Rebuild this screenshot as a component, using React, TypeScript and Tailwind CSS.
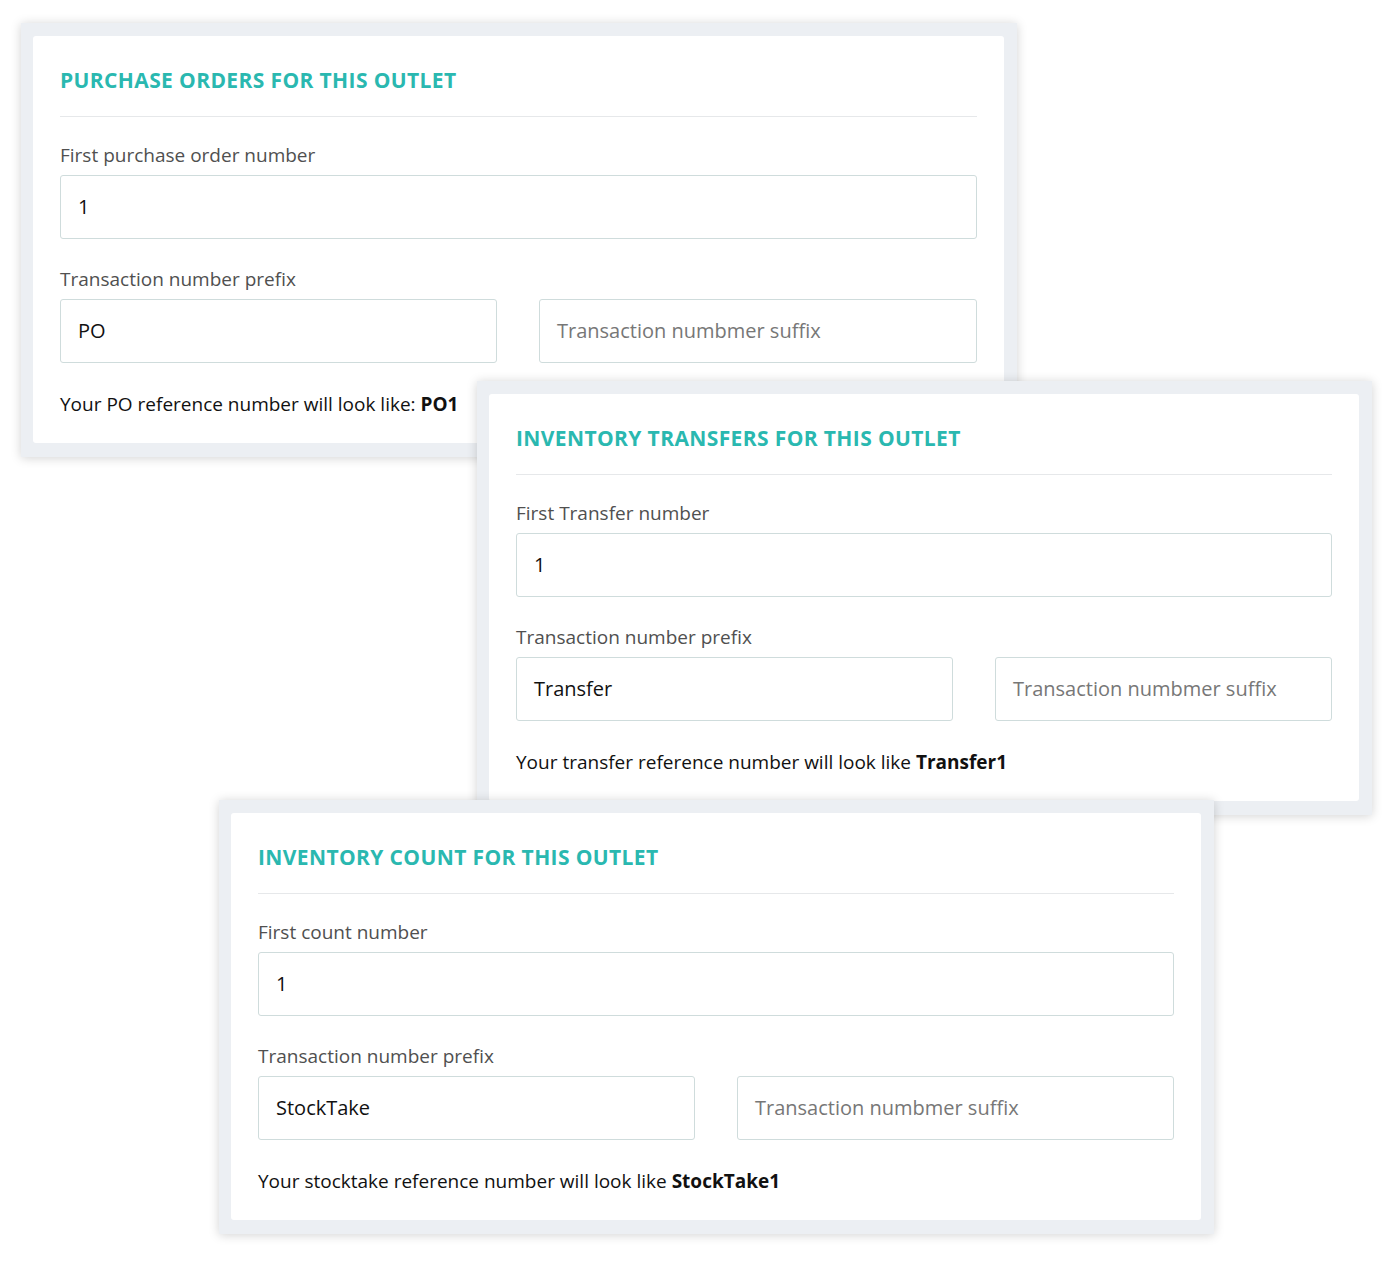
import React from 'react'

type CardProps = {
  title: string
  firstLabel: string
  prefix: string
  previewText: string
  previewValue: string
}

function Field({ value, placeholder, className }: { value?: string; placeholder?: string; className?: string }) {
  return (
    <div
      className={`h-[64px] rounded-[3px] border border-[#cfdcdc] bg-white px-[17px] flex items-center text-[20px] ${className ?? ''}`}
    >
      {value ? (
        <span className="text-[#111]">{value}</span>
      ) : (
        <span className="text-[#777]">{placeholder}</span>
      )}
    </div>
  )
}

function SettingsCard({ title, firstLabel, prefix, previewText, previewValue }: CardProps) {
  return (
    <div className="bg-[#eceff3] pl-[12px] pt-[13px] pr-[13px] pb-[14px] shadow-[0_1px_10px_rgba(0,0,0,0.18)]">
      <div className="bg-white rounded-[3px] px-[27px] pt-[30px] pb-[27px]">
        <h2 className="text-[21px] leading-[28px] font-bold text-[#2ab8b0] tracking-[0.38px]">{title}</h2>
        <div className="mt-[22px] h-px bg-[#e6e8ea]" />

        <p className="mt-[26px] text-[19px] leading-[24px] text-[#505050]">{firstLabel}</p>
        <Field value="1" className="mt-[8px]" />

        <p className="mt-[28px] text-[19px] leading-[24px] text-[#505050]">Transaction number prefix</p>
        <div className="mt-[8px] flex gap-[42px]">
          <Field value={prefix} className="w-[437px] shrink-0" />
          <Field placeholder="Transaction numbmer suffix" className="flex-1" />
        </div>

        <p className="mt-[29px] text-[19px] leading-[24px] text-[#111]">
          {previewText} <span className="font-bold">{previewValue}</span>
        </p>
      </div>
    </div>
  )
}

export default function App() {
  return (
    <div
      className="relative w-[1400px] h-[1262px] bg-white overflow-hidden"
      style={{ fontFamily: '"Open Sans", "Noto Sans", sans-serif' }}
    >
      <div className="absolute left-[21px] top-[23px] w-[996px]">
        <SettingsCard
          title="PURCHASE ORDERS FOR THIS OUTLET"
          firstLabel="First purchase order number"
          prefix="PO"
          previewText="Your PO reference number will look like:"
          previewValue="PO1"
        />
      </div>
      <div className="absolute left-[477px] top-[381px] w-[895px]">
        <SettingsCard
          title="INVENTORY TRANSFERS FOR THIS OUTLET"
          firstLabel="First Transfer number"
          prefix="Transfer"
          previewText="Your transfer reference number will look like"
          previewValue="Transfer1"
        />
      </div>
      <div className="absolute left-[219px] top-[800px] w-[995px]">
        <SettingsCard
          title="INVENTORY COUNT FOR THIS OUTLET"
          firstLabel="First count number"
          prefix="StockTake"
          previewText="Your stocktake reference number will look like"
          previewValue="StockTake1"
        />
      </div>
    </div>
  )
}
